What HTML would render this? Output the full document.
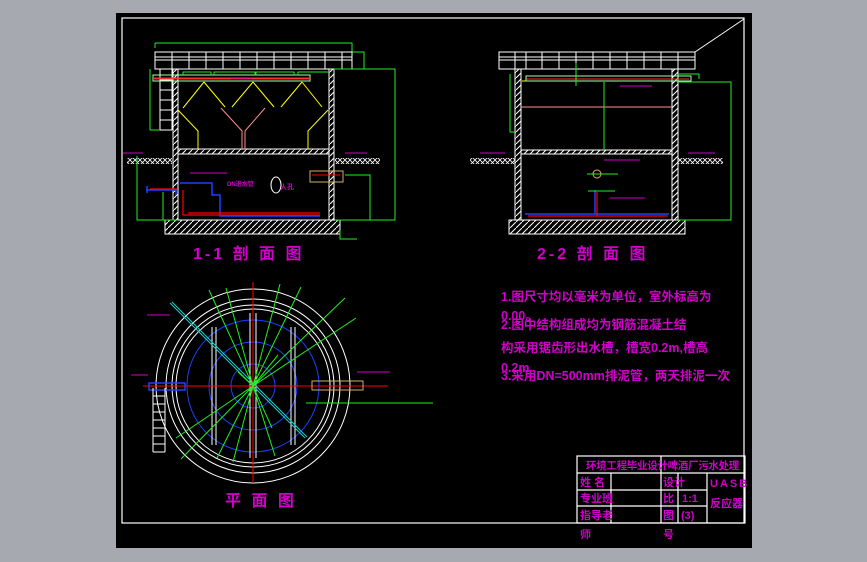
<!DOCTYPE html>
<html><head><meta charset="utf-8"><style>
html,body{margin:0;padding:0;background:#a6aab0;width:867px;height:562px;overflow:hidden}
svg{display:block}
text{font-family:"Liberation Sans","Noto Sans CJK SC",sans-serif;fill:#d000c8;font-weight:bold}
</style></head><body>
<svg width="867" height="562" viewBox="0 0 867 562" xmlns="http://www.w3.org/2000/svg">
<defs>
<pattern id="h" width="6" height="6" patternUnits="userSpaceOnUse"><path d="M0 6L6 0" stroke="#fff" stroke-width="1"/></pattern>
<pattern id="g" width="5" height="5" patternUnits="userSpaceOnUse"><path d="M0 0L5 5M5 0L0 5" stroke="#fff" stroke-width="0.8"/></pattern>
</defs>
<rect x="116" y="13" width="636" height="535" fill="#000"/>
<rect x="122" y="18" width="622" height="505" fill="none" stroke="#fff" stroke-width="1.2"/>
<line x1="695" y1="52" x2="744" y2="19" stroke="#fff"/>

<!-- 1-1 section -->
<g fill="none" stroke-width="1">
<path d="M155 43H352V60M155 43V48M338 52H364V69M166 69H180M155 69V52" stroke="#22ee22"/>
<rect x="155" y="52" width="197" height="17" stroke="#fff"/>
<path d="M155 57H352M155 60H352" stroke="#fff"/>
<path d="M172 52V69M189 52V69M206 52V69M223 52V69M240 52V69M257 52V69M274 52V69M291 52V69M308 52V69M325 52V69M342 52V69" stroke="#fff"/>
<rect x="173" y="69" width="5" height="151" fill="url(#h)" stroke="#fff"/>
<rect x="329" y="69" width="5" height="151" fill="url(#h)" stroke="#fff"/>
<rect x="178" y="149" width="151" height="5" fill="url(#h)" stroke="#fff"/>
<rect x="165" y="220" width="175" height="14" fill="url(#h)" stroke="#fff"/>
<rect x="127" y="158" width="45" height="6" fill="url(#g)" stroke="none"/>
<rect x="335" y="158" width="45" height="6" fill="url(#g)" stroke="none"/>
<path d="M160 69V130M172 69V130M160 80H172M160 90H172M160 100H172M160 110H172M160 120H172M160 130H172" stroke="#fff"/>
<path d="M150 69V130H160M137 156V220H178M163 192V220M335 220H395V69H334M345 175H370V220H353M340 230V239H357" stroke="#22ee22"/>
<path d="M154 78H309M154 79H309" stroke="#ff3030"/>
<rect x="153" y="75" width="157" height="6" stroke="#aaffaa"/>
<path d="M183 75V72H211V75M214 75V72H255V75M256 75V72H294V75M298 75V72H330" stroke="#22ee22"/>
<path d="M204 82L183 108M204 82L225 107M253 82L232 107M253 82L274 107M302 82L281 107M302 82L322 107M178 110L198 131V149M328 110L308 131V149" stroke="#ffff00"/>
<path d="M221 108L242 131V149M265 108L245 131V149" stroke="#ff9090"/>
<path d="M180 183H212V195H220V216H320M146 190H176V195M147 186V193" stroke="#1a40ff" stroke-width="1.5"/>
<path d="M150 189H178M183 190V215H320M188 213H320" stroke="#ff0000" stroke-width="1.2"/>
<rect x="310" y="171" width="33" height="11" stroke="#d4b06a"/>
<path d="M312 175H340" stroke="#ff0000"/>
<ellipse cx="276" cy="185" rx="5" ry="8" stroke="#fff"/>
<path d="M123 153H143M345 153H367M190 173H227M231 79H252" stroke="#d000c8"/>
</g>
<text x="193" y="259" font-size="16" letter-spacing="3">1-1 剖 面 图</text>
<text x="227" y="186" font-size="6">DN进水管</text>
<text x="280" y="189" font-size="7">人孔</text>

<!-- 2-2 section -->
<g fill="none" stroke-width="1">
<rect x="499" y="52" width="196" height="17" stroke="#fff"/>
<path d="M499 57H695M499 60H695" stroke="#fff"/>
<path d="M515 52V69M526 52V69M542 52V69M559 52V69M576 52V69M593 52V69M610 52V69M627 52V69M644 52V69M661 52V69M678 52V69" stroke="#fff"/>
<rect x="515" y="69" width="6" height="151" fill="url(#h)" stroke="#fff"/>
<rect x="672" y="69" width="6" height="151" fill="url(#h)" stroke="#fff"/>
<rect x="521" y="150" width="151" height="4" fill="url(#h)" stroke="#fff"/>
<rect x="509" y="220" width="176" height="14" fill="url(#h)" stroke="#fff"/>
<rect x="470" y="158" width="45" height="6" fill="url(#g)" stroke="none"/>
<rect x="678" y="158" width="45" height="6" fill="url(#g)" stroke="none"/>
<path d="M522 81H673" stroke="#ffff00"/>
<path d="M521 107H672" stroke="#ff9090"/>
<path d="M526 79H689" stroke="#ff3030"/>
<rect x="526" y="76" width="165" height="5" stroke="#aaffaa"/>
<path d="M510 74V132H516M676 74H699V79M678 82H731V220H678M604 82V149M576 63V86" stroke="#22ee22"/>
<path d="M525 214H669M595 190V214" stroke="#1a40ff" stroke-width="1.5"/>
<path d="M528 216H668M597 192V216" stroke="#ff0000" stroke-width="1.2"/>
<circle cx="597" cy="174" r="4" stroke="#d4b06a"/>
<path d="M587 174H618M588 191H615" stroke="#22ee22"/>
<path d="M480 153H505M688 153H715M604 160H640M610 198H645M620 86H652" stroke="#d000c8"/>
</g>
<text x="537" y="259" font-size="16" letter-spacing="3">2-2 剖 面 图</text>

<!-- plan -->
<g fill="none" stroke-width="1">
<circle cx="253" cy="386" r="97" stroke="#fff"/>
<circle cx="253" cy="386" r="87" stroke="#fff"/>
<circle cx="253" cy="386" r="81" stroke="#fff"/>
<circle cx="253" cy="386" r="77" stroke="#fff"/>
<circle cx="253" cy="386" r="66" stroke="#1a40ff"/>
<circle cx="253" cy="386" r="44" stroke="#1a40ff"/>
<circle cx="253" cy="386" r="22" stroke="#1a40ff"/>
<path d="M212 327V445M216 327V445M291 327V445M295 327V445M250 313V458M256 313V458" stroke="#fff"/>
<path d="M143 386H388M253 282V483" stroke="#ff0000"/>
<path d="M170 303L305 438M172 302L307 437" stroke="#22cccc"/>
<path d="M253 386L209 290M253 386L226 288M253 386L280 284M253 386L301 287M253 386L345 298M253 386L356 318M253 386L176 438M253 386L181 459M253 386L217 458M253 386L233 462M253 386L275 456M253 386L272 428M253 386L238 372M253 386L278 355" stroke="#22ee22"/>
<path d="M306 403H433" stroke="#22ee22"/>
<rect x="149" y="383" width="36" height="7" stroke="#1a40ff" stroke-width="1.5"/>
<rect x="312" y="381" width="51" height="9" stroke="#d4b06a"/>
<path d="M153 388V452M165 388V452M153 396H165M153 404H165M153 412H165M153 420H165M153 428H165M153 436H165M153 444H165M153 452H165" stroke="#fff"/>
<path d="M147 315H170M131 375H148M357 372H390" stroke="#d000c8"/>
</g>
<text x="225" y="506" font-size="16" letter-spacing="3">平 面 图</text>

<!-- notes -->
<g font-size="12.5">
<text x="501" y="301">1.图尺寸均以毫米为单位，室外标高为</text>
<text x="501" y="320">0.00。</text>
<text x="501" y="329">2.图中结构组成均为钢筋混凝土结</text>
<text x="501" y="352">构采用锯齿形出水槽，槽宽0.2m,槽高</text>
<text x="501" y="372">0.2m</text>
<text x="501" y="380">3.采用DN=500mm排泥管，两天排泥一次</text>
</g>

<!-- title block -->
<g fill="none" stroke="#fff" stroke-width="1.2">
<rect x="577" y="456" width="168" height="67"/>
<path d="M577 473H745M577 490H707M577 506H707M611 473V523M661 456V523M678 473V523M707 473V523"/>
</g>
<g font-size="11">
<text x="586" y="469" font-size="10.5" letter-spacing="-0.3">环境工程毕业设计啤酒厂污水处理</text>
<text x="580" y="486">姓 名</text>
<text x="580" y="502">专业班</text>
<text x="580" y="519">指导老</text>
<text x="580" y="538">师</text>
<text x="663" y="486">设计</text>
<text x="663" y="502">比</text>
<text x="682" y="502">1:1</text>
<text x="663" y="519">图</text>
<text x="681" y="519">(3)</text>
<text x="663" y="538">号</text>
<text x="710" y="487" letter-spacing="2" font-weight="normal">UASB</text>
<text x="710" y="507">反应器</text>
</g>
</svg>
</body></html>
